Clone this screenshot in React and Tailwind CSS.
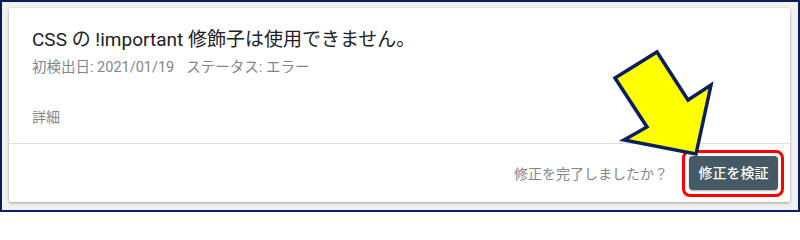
import React from "react";

export default function App() {
  return (
    <div className="relative w-[800px] h-[212px] border-2 border-[#0b1d5a] bg-[#f1f1f1] pl-[7px] pt-[6px] pr-[8px] pb-[8px] font-['Roboto','Noto_Sans_CJK_JP',sans-serif] overflow-hidden">
      <div className="flex flex-col h-full bg-white shadow-[0_1px_3px_rgba(0,0,0,0.35)] rounded-[2px]">
        <div className="flex flex-col pl-[23px] pt-[19px] h-[135px]">
          <div className="text-[19px] leading-[25px] text-[#202124]">
            CSS の !important 修飾子は使用できません。
          </div>
          <div className="mt-[6px] text-[14.5px] leading-[20px] text-[#80868b] flex">
            <span>初検出日: 2021/01/19</span>
            <span className="ml-[12px]">ステータス: エラー</span>
          </div>
          <div className="mt-[29px] text-[14px] leading-[20px] text-[#80868b]">詳細</div>
        </div>
        <div className="border-t border-[#e0e0e0] flex-1 flex items-center justify-end pr-[12px]">
          <span className="text-[14px] leading-[20px] text-[#80868b] mr-[21px] mt-[2px]">修正を完了しましたか？</span>
          <button className="w-[89px] h-[34px] rounded-[4px] bg-[#455a64] text-white text-[14px] font-medium shadow-[0_1px_2px_rgba(0,0,0,0.3)]">
            修正を検証
          </button>
        </div>
      </div>
      <div className="absolute left-[680px] top-[148px] w-[102px] h-[47px] border-[3px] border-[#ff0000] rounded-[8px]" />
      <svg className="absolute left-[-2px] top-[-2px]" width="800" height="212" viewBox="0 0 800 212">
        <polygon
          points="615,78 657,52 688,100 711,85 696,154 624,140 647,127"
          fill="#ffff00"
          stroke="#0a1f5c"
          strokeWidth="3.5"
          strokeLinejoin="miter"
        />
      </svg>
    </div>
  );
}
